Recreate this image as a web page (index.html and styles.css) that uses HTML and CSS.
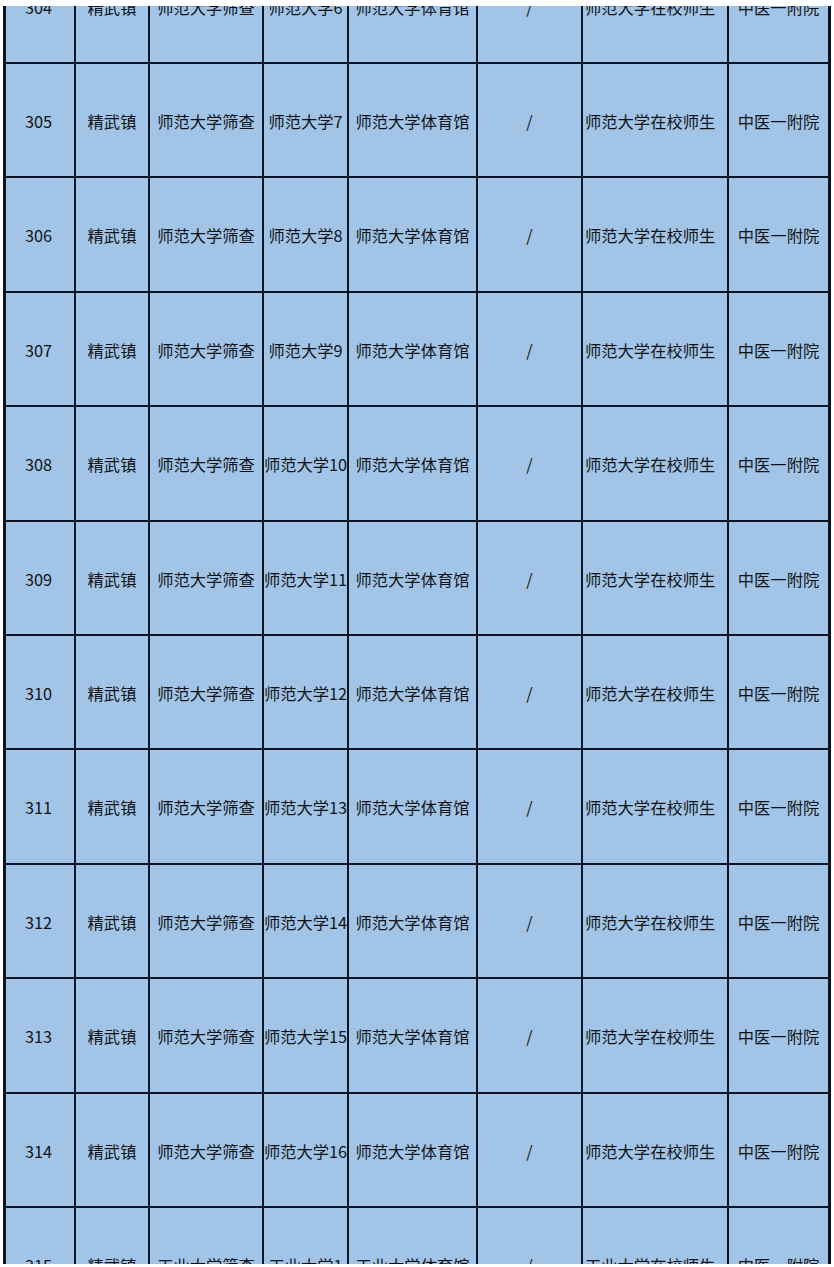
FILE: index.html
```html
<!DOCTYPE html>
<html lang="zh-CN">
<head>
<meta charset="utf-8">
<title>筛查点位表</title>
<link rel="stylesheet" href="styles.css">
</head>
<body>
<div class="sheet">
  <div class="table">
    <div class="row"><div class="c">304</div><div class="c">精武镇</div><div class="c">师范大学筛查</div><div class="c">师范大学6</div><div class="c">师范大学体育馆</div><div class="c">/</div><div class="c wide">师范大学在校师生</div><div class="c">中医一附院</div></div>
    <div class="row"><div class="c">305</div><div class="c">精武镇</div><div class="c">师范大学筛查</div><div class="c">师范大学7</div><div class="c">师范大学体育馆</div><div class="c">/</div><div class="c wide">师范大学在校师生</div><div class="c">中医一附院</div></div>
    <div class="row"><div class="c">306</div><div class="c">精武镇</div><div class="c">师范大学筛查</div><div class="c">师范大学8</div><div class="c">师范大学体育馆</div><div class="c">/</div><div class="c wide">师范大学在校师生</div><div class="c">中医一附院</div></div>
    <div class="row"><div class="c">307</div><div class="c">精武镇</div><div class="c">师范大学筛查</div><div class="c">师范大学9</div><div class="c">师范大学体育馆</div><div class="c">/</div><div class="c wide">师范大学在校师生</div><div class="c">中医一附院</div></div>
    <div class="row"><div class="c">308</div><div class="c">精武镇</div><div class="c">师范大学筛查</div><div class="c">师范大学10</div><div class="c">师范大学体育馆</div><div class="c">/</div><div class="c wide">师范大学在校师生</div><div class="c">中医一附院</div></div>
    <div class="row"><div class="c">309</div><div class="c">精武镇</div><div class="c">师范大学筛查</div><div class="c">师范大学11</div><div class="c">师范大学体育馆</div><div class="c">/</div><div class="c wide">师范大学在校师生</div><div class="c">中医一附院</div></div>
    <div class="row"><div class="c">310</div><div class="c">精武镇</div><div class="c">师范大学筛查</div><div class="c">师范大学12</div><div class="c">师范大学体育馆</div><div class="c">/</div><div class="c wide">师范大学在校师生</div><div class="c">中医一附院</div></div>
    <div class="row"><div class="c">311</div><div class="c">精武镇</div><div class="c">师范大学筛查</div><div class="c">师范大学13</div><div class="c">师范大学体育馆</div><div class="c">/</div><div class="c wide">师范大学在校师生</div><div class="c">中医一附院</div></div>
    <div class="row"><div class="c">312</div><div class="c">精武镇</div><div class="c">师范大学筛查</div><div class="c">师范大学14</div><div class="c">师范大学体育馆</div><div class="c">/</div><div class="c wide">师范大学在校师生</div><div class="c">中医一附院</div></div>
    <div class="row"><div class="c">313</div><div class="c">精武镇</div><div class="c">师范大学筛查</div><div class="c">师范大学15</div><div class="c">师范大学体育馆</div><div class="c">/</div><div class="c wide">师范大学在校师生</div><div class="c">中医一附院</div></div>
    <div class="row"><div class="c">314</div><div class="c">精武镇</div><div class="c">师范大学筛查</div><div class="c">师范大学16</div><div class="c">师范大学体育馆</div><div class="c">/</div><div class="c wide">师范大学在校师生</div><div class="c">中医一附院</div></div>
    <div class="row"><div class="c">315</div><div class="c">精武镇</div><div class="c">工业大学筛查</div><div class="c">工业大学1</div><div class="c">工业大学体育馆</div><div class="c">/</div><div class="c wide">工业大学在校师生</div><div class="c">中医一附院</div></div>
  </div>
</div>
</body>
</html>
```

FILE: styles.css
```css
html, body {
  margin: 0;
  padding: 0;
  background: #ffffff;
}

.sheet {
  box-sizing: border-box;
  width: 828px;
  height: 1258px;
  margin: 6px 0 0 3px;
  overflow: hidden;
  border-left: 3px solid #0b1424;
  border-right: 3px solid #0b1424;
  background: #a2c5e7;
}

.table {
  margin-top: -56.4px;
  font-family: "Noto Sans CJK SC", "Noto Sans", sans-serif;
  font-size: 16.3px;
  font-weight: 400;
  color: #101316;
}

.row {
  display: grid;
  grid-template-columns: 70px 74px 114px 85px 129px 105px 146px 99px;
  height: 114.4px;
  box-sizing: border-box;
  border-bottom: 2px solid #0b1424;
}

.c {
  box-sizing: border-box;
  display: flex;
  align-items: center;
  justify-content: center;
  padding-top: 2px;
  border-right: 2px solid #0b1424;
  white-space: nowrap;
  overflow: visible;
  line-height: 1;
}

.c:last-child {
  border-right: none;
}

.c:first-child {
  padding-right: 3px;
}

.c.wide {
  justify-content: flex-start;
  padding-left: 2px;
}
```
